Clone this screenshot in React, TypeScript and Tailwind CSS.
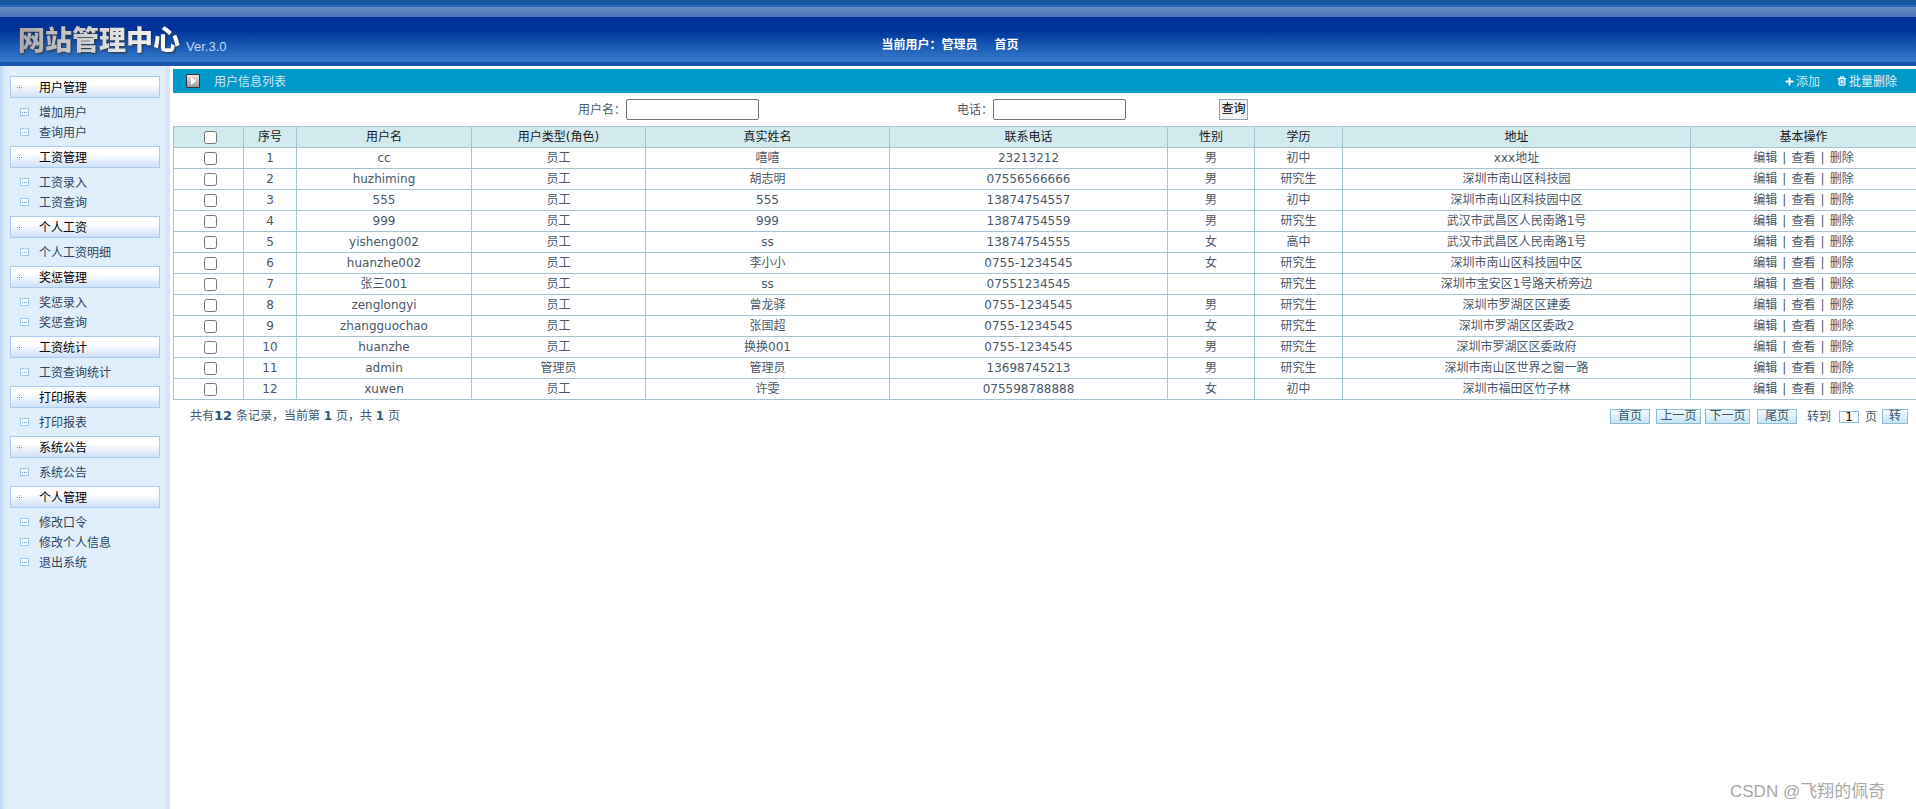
import { Fragment } from 'react'
import { Plus, Trash2 } from 'lucide-react'

const menu = [
  { title: '用户管理', items: ['增加用户', '查询用户'] },
  { title: '工资管理', items: ['工资录入', '工资查询'] },
  { title: '个人工资', items: ['个人工资明细'] },
  { title: '奖惩管理', items: ['奖惩录入', '奖惩查询'] },
  { title: '工资统计', items: ['工资查询统计'] },
  { title: '打印报表', items: ['打印报表'] },
  { title: '系统公告', items: ['系统公告'] },
  { title: '个人管理', items: ['修改口令', '修改个人信息', '退出系统'] },
]

const rows = [
  ['cc', '员工', '嘻嘻', '23213212', '男', '初中', 'xxx地址'],
  ['huzhiming', '员工', '胡志明', '07556566666', '男', '研究生', '深圳市南山区科技园'],
  ['555', '员工', '555', '13874754557', '男', '初中', '深圳市南山区科技园中区'],
  ['999', '员工', '999', '13874754559', '男', '研究生', '武汉市武昌区人民南路1号'],
  ['yisheng002', '员工', 'ss', '13874754555', '女', '高中', '武汉市武昌区人民南路1号'],
  ['huanzhe002', '员工', '李小小', '0755-1234545', '女', '研究生', '深圳市南山区科技园中区'],
  ['张三001', '员工', 'ss', '07551234545', '', '研究生', '深圳市宝安区1号路天桥旁边'],
  ['zenglongyi', '员工', '曾龙驿', '0755-1234545', '男', '研究生', '深圳市罗湖区区建委'],
  ['zhangguochao', '员工', '张国超', '0755-1234545', '女', '研究生', '深圳市罗湖区区委政2'],
  ['huanzhe', '员工', '换换001', '0755-1234545', '男', '研究生', '深圳市罗湖区区委政府'],
  ['admin', '管理员', '管理员', '13698745213', '男', '研究生', '深圳市南山区世界之窗一路'],
  ['xuwen', '员工', '许雯', '075598788888', '女', '初中', '深圳市福田区竹子林'],
]

const headers = ['序号', '用户名', '用户类型(角色)', '真实姓名', '联系电话', '性别', '学历', '地址', '基本操作']
const colWidths = ['w-[70px]', 'w-[53px]', 'w-[175px]', 'w-[174px]', 'w-[244px]', 'w-[278px]', 'w-[87px]', 'w-[88px]', 'w-[348px]', 'w-[226px]']

const font = "font-['DejaVu_Sans','Noto_Sans_CJK_SC',sans-serif]"

function MenuIcon() {
  return (
    <span className="w-[9px] h-[8px] mr-[9px] border border-[#9cc8f4] bg-white flex items-center justify-center gap-px">
      <i className="w-px h-px bg-[#5b9be0]" />
      <i className="w-px h-px bg-[#5b9be0]" />
      <i className="w-px h-px bg-[#5b9be0]" />
    </span>
  )
}

function DotIcon() {
  return (
    <svg width="5" height="5" viewBox="0 0 5 5" className="ml-[6px] mr-[17px]">
      <rect x="2" y="0" width="1" height="1" fill="#7fb2e8" />
      <rect x="0" y="2" width="1" height="1" fill="#4f93dc" />
      <rect x="2" y="2" width="1" height="1" fill="#4f93dc" />
      <rect x="4" y="2" width="1" height="1" fill="#4f93dc" />
      <rect x="2" y="4" width="1" height="1" fill="#7fb2e8" />
    </svg>
  )
}

function Checkbox() {
  return <span className="inline-block align-middle ml-[3px] w-[13px] h-[13px] rounded-[2.5px] border border-[#767676] bg-white" />
}

function PageButton({ label, width }: { label: string; width: string }) {
  return (
    <button className={`${width} h-[15px] border border-[#8fbdd0] bg-gradient-to-b from-[#f4fafd] to-[#c6e4f4] text-[12px] leading-[13px] text-[#3a5568]`}>
      {label}
    </button>
  )
}

export default function App() {
  return (
    <div className={`relative w-[1916px] h-[809px] overflow-hidden bg-white ${font} text-[12px]`}>
      {/* top banner */}
      <header className="h-[66px] flex flex-col bg-gradient-to-b from-[#003399] from-[45%] to-[#3377c8] to-[90%]">
        <div className="h-[5px] shrink-0 bg-[#15579c]" />
        <div className="h-[2px] shrink-0 bg-[#2a6ac0]" />
        <div className="h-[10px] shrink-0 bg-gradient-to-b from-[#6a8cc4] to-[#4a6fb6]" />
        <div className="flex-1 relative flex items-start">
          <span className="ml-[18px] mt-[7px] text-[27px] leading-[30px] font-black text-transparent bg-clip-text bg-gradient-to-r from-[#a8a8a8] via-[#d8d8d8] to-white [filter:drop-shadow(1px_1px_1px_#333)] font-['Noto_Sans_CJK_SC',sans-serif]">
            网站管理中心
          </span>
          <span className="ml-[6px] mt-[22px] text-[13px] leading-[15px] text-[#c4d8f0] font-['Liberation_Sans',sans-serif]">Ver.3.0</span>
          <span className="ml-[655px] mt-[19px] text-[12px] leading-[16px] font-bold text-white font-['Noto_Sans_CJK_SC',sans-serif]">
            当前用户：管理员
          </span>
          <span className="ml-[17px] mt-[19px] text-[12px] leading-[16px] font-bold text-white font-['Noto_Sans_CJK_SC',sans-serif]">首页</span>
        </div>
        <div className="h-[4px] shrink-0 bg-[#1a56ae]" />
      </header>

      <div className="flex h-[743px]">
        {/* sidebar */}
        <aside className="w-[170px] shrink-0 pl-[10px] pr-[10px] pt-[10px] border-r-2 border-[#d6e6f8] bg-[linear-gradient(to_right,#bcd8f6_0px,#e0eefb_6px,#e0eefb_164px,#cfe2f8_168px)]">
          {menu.map((group) => (
            <Fragment key={group.title}>
              <div className="h-[22px] w-[150px] flex items-center border border-[#a9cdf2] bg-gradient-to-b from-white from-[35%] to-[#cfe0f5] text-black font-['Noto_Sans_CJK_SC',sans-serif]">
                <DotIcon />
                <span className="-mt-px">{group.title}</span>
              </div>
              <ul className="py-[4px]">
                {group.items.map((item) => (
                  <li key={item} className="h-[20px] flex items-center pl-[10px] text-[#2d4560] font-['Noto_Sans_CJK_SC',sans-serif]">
                    <MenuIcon />
                    <span className="ml-[1px] -mt-px">{item}</span>
                  </li>
                ))}
              </ul>
            </Fragment>
          ))}
        </aside>

        {/* main content */}
        <main className="flex-1 min-w-0 overflow-hidden pt-[3px] pl-[3px]">
          <div className="h-[24px] flex items-center bg-[#0099cc] pl-[13px] pr-[19px] text-[#cfe8f2] font-['Noto_Sans_CJK_SC',sans-serif]">
            <span className="w-[14px] h-[14px] rounded-[1px] border border-[#333] bg-gradient-to-b from-[#e8e8e8] to-[#9a9a9a] flex items-center justify-center">
              <span className="w-0 h-0 border-y-[4px] border-y-transparent border-l-[5px] border-l-white" />
            </span>
            <span className="ml-[14px]">用户信息列表</span>
            <Plus size={11} strokeWidth={4} className="ml-auto text-white" />
            <span className="ml-[1px]">添加</span>
            <Trash2 size={10} strokeWidth={3} className="ml-[17px] text-white" />
            <span className="ml-[2px] text-[#e4f2f8]">批量删除</span>
          </div>

          <div className="h-[33px] flex items-center text-[#4a5a68]">
            <span className="ml-[405px] w-[48px] whitespace-nowrap">用户名：</span>
            <span className="w-[133px] h-[21px] border border-[#767676] rounded-[2px] bg-white" />
            <span className="ml-[198px] w-[36px] whitespace-nowrap">电话：</span>
            <span className="w-[133px] h-[21px] border border-[#767676] rounded-[2px] bg-white" />
            <button className="ml-[93px] w-[29px] h-[21px] border border-[#8aa4b8] bg-[#f2f2f2] text-black leading-[19px]">查询</button>
          </div>

          <table className="w-[1743px] table-fixed border-collapse text-center text-[#4a5868]">
            <colgroup>
              {colWidths.map((w, i) => (
                <col key={i} className={w} />
              ))}
            </colgroup>
            <thead>
              <tr className="h-[21px] bg-[#d2e9ee] text-[#1a1a1a]">
                <th className="border border-[#a5c5d0] font-normal p-0"><Checkbox /></th>
                {headers.map((h) => (
                  <th key={h} className="border border-[#a5c5d0] font-normal p-0">{h}</th>
                ))}
              </tr>
            </thead>
            <tbody>
              {rows.map((row, i) => (
                <tr key={i} className="h-[21px]">
                  <td className="border border-[#a5c5d0] p-0"><Checkbox /></td>
                  <td className="border border-[#a5c5d0] p-0">{i + 1}</td>
                  {row.map((cell, j) => (
                    <td key={j} className="border border-[#a5c5d0] p-0 whitespace-nowrap">{cell}</td>
                  ))}
                  <td className="border border-[#a5c5d0] p-0 [word-spacing:1.3px]">编辑 | 查看 | 删除</td>
                </tr>
              ))}
            </tbody>
          </table>

          <div className="h-[24px] w-[1737px] mt-[9px] flex items-start text-[#44586a]">
            <span className="ml-[17px] mt-[-3px]">
              共有<b className="text-[13px] text-[#2d5a78]">12</b> 条记录，当前第 <b className="text-[#2d5a78]">1</b> 页，共 <b className="text-[#2d5a78]">1</b> 页
            </span>
            <div className="ml-auto mr-[2px] flex items-center h-[15px]">
              <PageButton label="首页" width="w-[40px]" />
              <span className="w-[6px]" />
              <PageButton label="上一页" width="w-[45px]" />
              <span className="w-[4px]" />
              <PageButton label="下一页" width="w-[45px]" />
              <span className="w-[7px]" />
              <PageButton label="尾页" width="w-[40px]" />
              <span className="ml-[10px]">转到</span>
              <span className="ml-[8px] w-[20px] h-[12px] border border-[#8fbdd0] bg-white text-black text-center leading-[11px]">1</span>
              <span className="ml-[6px]">页</span>
              <span className="w-[5px]" />
              <PageButton label="转" width="w-[26px]" />
            </div>
          </div>
        </main>
      </div>

      {/* csdn watermark */}
      <span className="absolute left-[1730px] top-[781px] text-[17px] leading-[22px] text-[#a8a8a8] font-['Liberation_Sans','Noto_Sans_CJK_SC',sans-serif]">
        CSDN @飞翔的佩奇
      </span>
    </div>
  )
}
